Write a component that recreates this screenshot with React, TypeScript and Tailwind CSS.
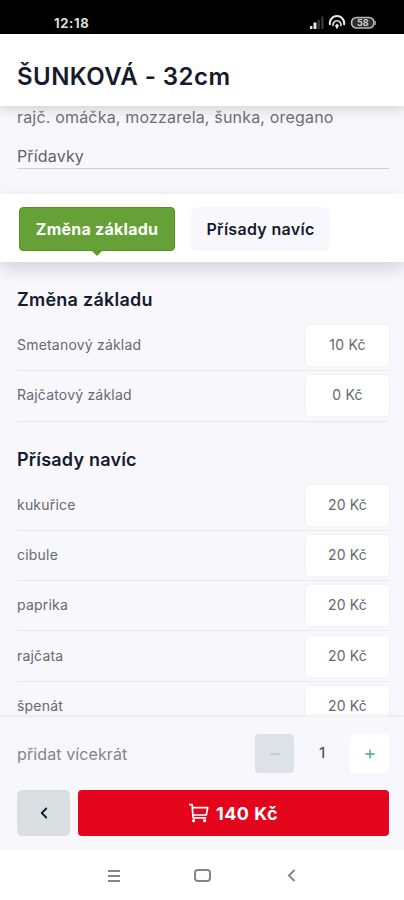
import { ChevronLeft, Minus, Plus } from "lucide-react";

type Extra = { name: string; price: string };

const bases: Extra[] = [
  { name: "Smetanový základ", price: "10 Kč" },
  { name: "Rajčatový základ", price: "0 Kč" },
];

const toppings: Extra[] = [
  { name: "kukuřice", price: "20 Kč" },
  { name: "cibule", price: "20 Kč" },
  { name: "paprika", price: "20 Kč" },
  { name: "rajčata", price: "20 Kč" },
  { name: "špenát", price: "20 Kč" },
];

function StatusBar() {
  return (
    <div className="flex h-[34px] shrink-0 items-start justify-between bg-black pt-[15px] pr-[28px] pl-[54px]">
      <span className="text-[13px] leading-[17px] font-bold tracking-[0.6px] text-[#dedede]">12:18</span>
      <svg width="66" height="16" viewBox="0 0 66 16" fill="none">
        <path d="M0 14v-3h2.4v3zM3.5 14V7.5h3V14z" fill="#e8e8e8" />
        <path d="M7.6 14V5h2.2v9zM11.3 14V1.5h2.2V14z" fill="#3c3c3c" />
        <path d="M20 10a7.2 7.2 0 1 1 14 0" stroke="#e8e8e8" strokeWidth="2" />
        <path d="M23.2 11a4 4 0 1 1 7.6 0" stroke="#e8e8e8" strokeWidth="1.7" />
        <path d="M25 10.5l2-2 2 2-2 4z" fill="#e8e8e8" />
        <rect x="41.5" y="2.5" width="22.5" height="10.5" rx="5" fill="#303030" stroke="#b8b8b8" strokeWidth="1.7" />
        <path d="M65.3 6v4" stroke="#b8b8b8" />
        <text x="52.8" y="11" textAnchor="middle" fontSize="9" fontWeight="700" fill="#d0d0d0">58</text>
      </svg>
    </div>
  );
}

function ExtraRow({ name, price }: Extra) {
  return (
    <div className="flex h-[50.3px] items-center justify-between border-b border-[#e9e9ed]">
      <span className="pb-[2px] text-[14px] tracking-[0.2px] text-[#686a70]">{name}</span>
      <span className="flex h-[41px] w-[83px] items-center justify-center rounded-[4px] bg-white pb-[2px] text-[14px] tracking-[0.2px] text-[#65676b] shadow-[0_0_3px_rgba(0,0,0,0.06)]">
        {price}
      </span>
    </div>
  );
}

function CartIcon() {
  return (
    <svg width="20" height="20" viewBox="0 0 20 20" fill="none" stroke="#fff" strokeWidth="1.7" strokeLinejoin="round">
      <path d="M0 1.7h3.2l.8 13.1h13.2" />
      <path d="M3.5 4.7h15.2l-1.4 7.3H3.9" />
      <circle cx="4.6" cy="17.7" r="1.6" fill="#fff" stroke="none" />
      <circle cx="15.6" cy="17.7" r="1.6" fill="#fff" stroke="none" />
    </svg>
  );
}

export default function App() {
  return (
    <div className="flex h-[900px] w-[404px] flex-col overflow-hidden bg-[#f7f7fc] font-['Inter','Noto_Sans',sans-serif] text-[#161a2c]">
      <StatusBar />
      <header className="z-10 flex h-[72px] shrink-0 items-center bg-white px-[17px] pt-[13px] shadow-[0_2px_14px_rgba(0,0,0,0.18)]">
        <h1 className="text-[24px] leading-[30px] font-semibold tracking-[0.45px] whitespace-nowrap">ŠUNKOVÁ - 32cm</h1>
      </header>

      <section className="h-[88px] shrink-0 px-[17px]">
        <p className="text-[16px] leading-[22px] tracking-[0.18px] whitespace-nowrap text-[#6e7076]">
          rajč. omáčka, mozzarela, šunka, oregano
        </p>
        <div className="mt-[17px] h-[24px] w-[372px] border-b border-[#cfcfd3] text-[16px] leading-[23px] tracking-[0.15px] text-[#606268]">
          Přídavky
        </div>
      </section>

      <nav className="z-10 flex h-[68px] shrink-0 gap-[16px] bg-white pt-[13px] pl-[19px] shadow-[0_7px_16px_rgba(0,0,0,0.15)]">
        <button className="relative h-[44px] w-[156px] rounded-[4px] border border-[#549322] bg-[#65a136] text-[16px] font-bold tracking-[0.25px] whitespace-nowrap text-white">
          Změna základu
          <span className="absolute -bottom-[6px] left-[71px] h-0 w-0 border-x-[6px] border-t-[6px] border-x-transparent border-t-[#5d9b2c]" />
        </button>
        <button className="h-[44px] w-[139px] rounded-[6px] bg-[#f8f8fc] text-[16px] font-semibold tracking-[0.3px] whitespace-nowrap">
          Přísady navíc
        </button>
      </nav>

      <main className="min-h-0 flex-1 overflow-hidden pr-[15px] pl-[17px]">
        <h2 className="pt-[25px] text-[18px] leading-[26px] font-semibold tracking-[0.25px]">Změna základu</h2>
        <div className="mt-[8px]">
          {bases.map((extra) => (
            <ExtraRow key={extra.name} {...extra} />
          ))}
        </div>
        <h2 className="pt-[25px] text-[18px] leading-[26px] font-semibold tracking-[0.2px]">Přísady navíc</h2>
        <div className="mt-[8px]">
          {toppings.map((extra) => (
            <ExtraRow key={extra.name} {...extra} />
          ))}
        </div>
      </main>

      <footer className="z-10 h-[133px] shrink-0 bg-[#f7f7fc] pr-[15px] pl-[17px] shadow-[0_-1px_4px_rgba(0,0,0,0.09)]">
        <div className="flex h-[73px] items-center">
          <span className="flex-1 text-[16px] tracking-[0.1px] text-[#84868c]">přidat vícekrát</span>
          <button className="flex h-[39px] w-[39px] items-center justify-center rounded-[4px] bg-[#dde1e8] text-[#adb2b9]">
            <Minus size={14} strokeWidth={1.8} />
          </button>
          <span className="w-[56px] text-center text-[15px] font-medium text-[#55575c]">1</span>
          <button className="flex h-[39px] w-[39px] items-center justify-center rounded-[4px] bg-white text-[#3bad7e]">
            <Plus size={14} strokeWidth={2.3} />
          </button>
        </div>
        <div className="flex gap-[8px]">
          <button className="flex h-[46px] w-[53px] items-center justify-center rounded-[5px] bg-[#d9dfe1]">
            <ChevronLeft size={18} strokeWidth={2.4} />
          </button>
          <button className="flex h-[46px] flex-1 items-center justify-center gap-[7px] rounded-[4px] bg-[#e2051b] text-[18px] font-bold tracking-[0.5px] text-white">
            <CartIcon />
            140 Kč
          </button>
        </div>
      </footer>

      <div className="z-10 flex h-[50px] shrink-0 items-center justify-center bg-white">
        <svg width="202" height="16" viewBox="0 0 202 16" fill="none" stroke="#858585" strokeWidth="1.8">
          <path d="M7 4h12M7 9h12M7 14h12" />
          <rect x="94" y="3" width="15" height="11" rx="3" strokeWidth="2" />
          <path d="M193.5 3l-5.5 5.5 5.5 5.5" strokeWidth="2" />
        </svg>
      </div>
    </div>
  );
}
